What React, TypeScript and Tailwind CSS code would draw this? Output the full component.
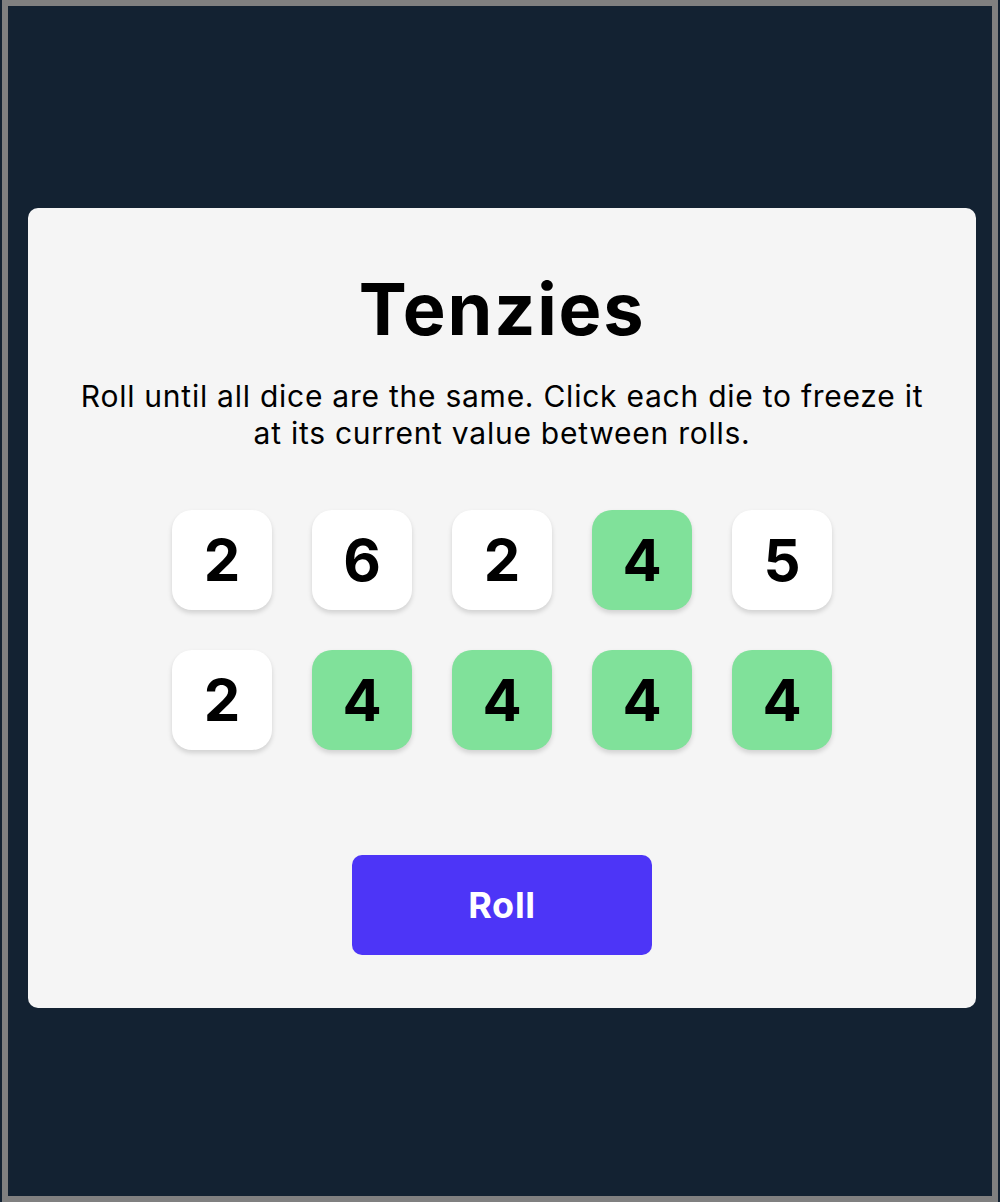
const dice = [
  { value: 2, held: false },
  { value: 6, held: false },
  { value: 2, held: false },
  { value: 4, held: true },
  { value: 5, held: false },
  { value: 2, held: false },
  { value: 4, held: true },
  { value: 4, held: true },
  { value: 4, held: true },
  { value: 4, held: true },
];

function Die({ value, held }: { value: number; held: boolean }) {
  return (
    <button
      className={
        "flex h-[100px] w-[100px] items-center justify-center rounded-[20px] text-[58px] font-bold text-black shadow-[0_3px_5px_rgba(0,0,0,0.15)] " +
        (held ? "bg-[#80e19a]" : "bg-white")
      }
    >
      {value}
    </button>
  );
}

export default function App() {
  return (
    <div className="bg-[#132232] px-[2px]" style={{ fontFamily: "Inter, 'Noto Sans', sans-serif" }}>
      <div className="h-[1202px] border-[6px] border-[#808080] bg-[#132232] pl-[20px] pt-[202px]">
        <main className="flex h-[800px] w-[948px] flex-col items-center rounded-[10px] bg-[#f5f5f5] pt-[58px]">
          <h1 className="text-[72px] font-bold leading-[86px] tracking-[0.025em] text-black">Tenzies</h1>
          <p className="mt-[26px] px-[36px] text-center text-[30px] leading-[37px] tracking-[0.75px] text-black">
            Roll until all dice are the same. Click each die to freeze it at its current value between rolls.
          </p>
          <div className="mt-[58px] grid grid-cols-5 gap-[40px]">
            {dice.map((d, i) => (
              <Die key={i} value={d.value} held={d.held} />
            ))}
          </div>
          <button className="mt-[105px] h-[100px] w-[300px] rounded-[10px] bg-[#4d35f7] text-[36px] font-bold tracking-[0.02em] text-white">
            Roll
          </button>
        </main>
      </div>
    </div>
  );
}
